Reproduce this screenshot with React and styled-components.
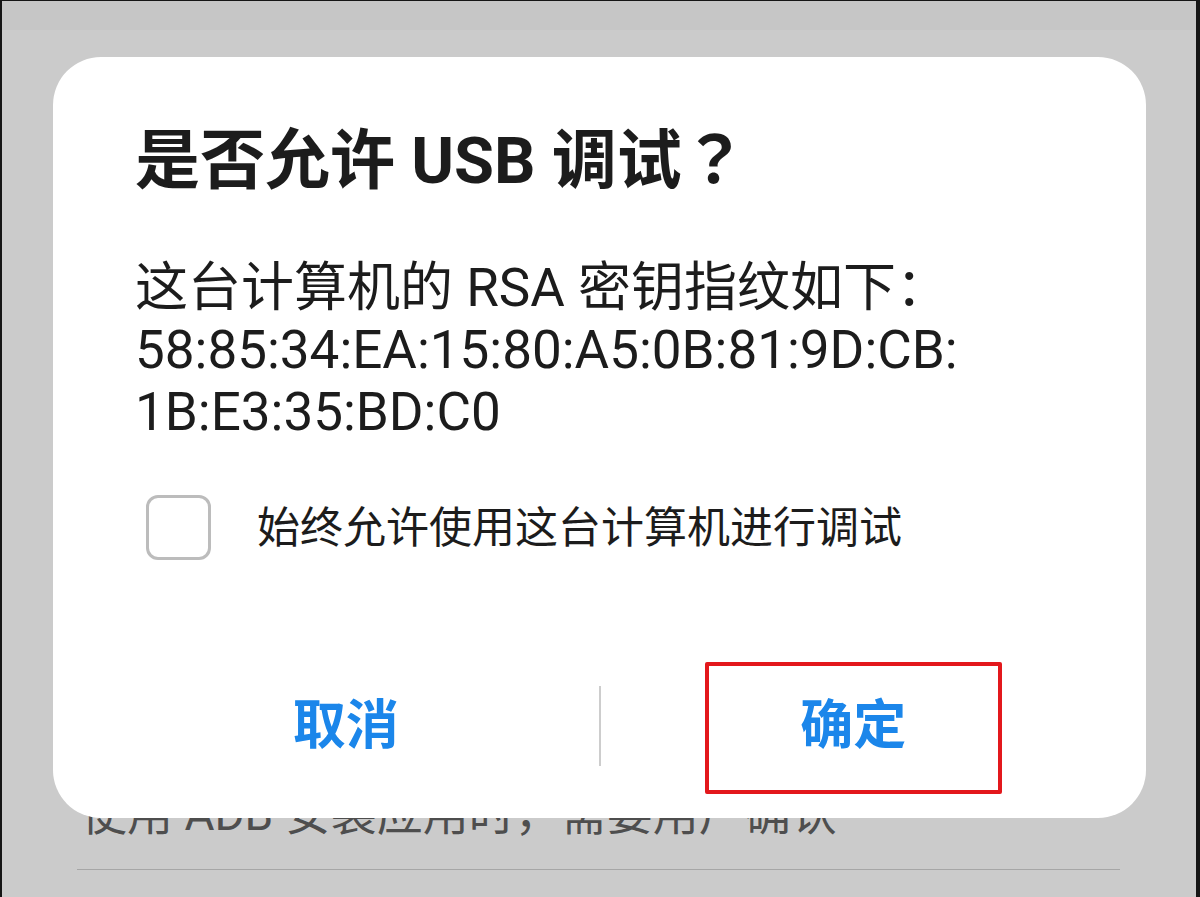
import React from "react";
import styled, { createGlobalStyle } from "styled-components";

const COLORS = {
  frame: "#151515",
  statusBar: "#c6c6c6",
  backdrop: "#cbcbcb",
  text: "#1c1c1c",
  muted: "#4e4e4e",
  rule: "#a6a6a6",
  blue: "#1b86ea",
  divider: "#cdcdcd",
  checkbox: "#bcbcbc",
  highlight: "#e3181c",
};

const FONT = `"Roboto", "Noto Sans CJK SC", sans-serif`;

const GlobalStyle = createGlobalStyle`
  html, body {
    margin: 0;
    padding: 0;
    background: ${COLORS.backdrop};
  }
  body {
    font-family: ${FONT};
  }
`;

const Screen = styled.div`
  position: relative;
  box-sizing: border-box;
  width: 1200px;
  height: 897px;
  overflow: hidden;
  background: ${COLORS.backdrop};
  border-left: 2px solid ${COLORS.frame};
  border-top: 1px solid ${COLORS.frame};
  border-right: 4px solid ${COLORS.frame};
`;

const StatusBar = styled.div`
  height: 29px;
  background: ${COLORS.statusBar};
`;

const SettingsList = styled.div`
  padding-top: 755px;
`;

const SettingText = styled.div`
  padding-left: 79px;
  font-size: 46px;
  line-height: 58px;
  color: ${COLORS.muted};
  white-space: nowrap;
`;

const SettingRule = styled.div`
  margin: 26px 0 0 75px;
  width: 1043px;
  height: 1px;
  background: ${COLORS.rule};
`;

/* the dialog floats over the settings page */
const Dialog = styled.div`
  position: absolute;
  left: 51px;
  top: 56px;
  width: 1093px;
  box-sizing: border-box;
  padding: 60px 0 24px;
  background: #fff;
  border-radius: 48px;
  display: flex;
  flex-direction: column;
`;

const Title = styled.h1`
  margin: 0;
  padding: 0 82px;
  font-size: 65px;
  line-height: 77px;
  font-weight: 700;
  color: ${COLORS.text};
`;

/* centred full-width punctuation, as on the device */
const Punct = styled.span`
  font-family: "Noto Sans CJK TC", "Noto Sans CJK SC", sans-serif;
`;

const Message = styled.p`
  margin: 57px 0 0;
  padding: 0 82px;
  font-size: 53px;
  line-height: 62px;
  color: ${COLORS.text};
`;

const CheckRow = styled.label`
  margin: 52px 0 0 93px;
  display: flex;
  align-items: center;
  gap: 46px;
`;

const CheckBox = styled.span`
  box-sizing: border-box;
  width: 65px;
  height: 65px;
  border: 3px solid ${COLORS.checkbox};
  border-radius: 12px;
  flex-shrink: 0;
`;

const CheckLabel = styled.span`
  font-size: 43px;
  line-height: 56px;
  color: ${COLORS.text};
`;

const Actions = styled.div`
  margin-top: 102px;
  padding: 0 40px;
  height: 132px;
  display: flex;
  align-items: center;
`;

const ActionButton = styled.button`
  flex: 1;
  height: 100%;
  border: none;
  background: none;
  padding: 0;
  display: flex;
  align-items: center;
  justify-content: center;
  font-family: ${FONT};
  font-size: 53px;
  font-weight: 700;
  line-height: 1;
  color: ${COLORS.blue};
`;

const ButtonText = styled.span`
  padding-bottom: 4px;
`;

const ActionDivider = styled.div`
  width: 2px;
  height: 80px;
  margin-top: -4px;
  background: ${COLORS.divider};
`;

const Highlight = styled.span`
  box-sizing: border-box;
  width: 297px;
  height: 132px;
  border: 4px solid ${COLORS.highlight};
  border-radius: 2px;
  display: flex;
  align-items: center;
  justify-content: center;
`;

export default function App() {
  return (
    <>
      <GlobalStyle />
      <Screen>
        <StatusBar />
        <SettingsList>
          <SettingText>使用 ADB 安装应用时，需要用户确认</SettingText>
          <SettingRule />
        </SettingsList>

        <Dialog>
          <Title>
            是否允许 USB 调试<Punct>？</Punct>
          </Title>
          <Message>
            这台计算机的 RSA 密钥指纹如下：
            <br />
            58:85:34:EA:15:80:A5:0B:81:9D:CB:
            <br />
            1B:E3:35:BD:C0
          </Message>
          <CheckRow>
            <CheckBox />
            <CheckLabel>始终允许使用这台计算机进行调试</CheckLabel>
          </CheckRow>
          <Actions>
            <ActionButton>
              <ButtonText>取消</ButtonText>
            </ActionButton>
            <ActionDivider />
            <ActionButton>
              <Highlight>
                <ButtonText>确定</ButtonText>
              </Highlight>
            </ActionButton>
          </Actions>
        </Dialog>
      </Screen>
    </>
  );
}
